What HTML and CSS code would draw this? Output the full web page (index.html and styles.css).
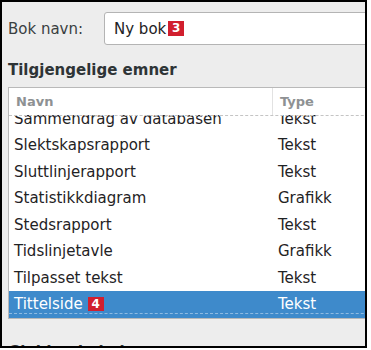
FILE: index.html
```html
<!DOCTYPE html>
<html lang="no">
<head>
<meta charset="utf-8">
<title>Bok</title>
<link rel="stylesheet" href="styles.css">
</head>
<body>
<div class="frame">
  <div class="name-row">
    <span class="label">Bok navn:</span>
    <div class="input">Ny bok<span class="badge badge-input">3</span></div>
  </div>
  <h2 class="section">Tilgjengelige emner</h2>
  <div class="list">
    <div class="head">
      <div class="col-name">Navn</div>
      <div class="col-type">Type</div>
    </div>
    <div class="body">
      <div class="rows">
        <div class="row"><div class="c-name">Sammendrag av databasen</div><div class="c-type">Tekst</div></div>
        <div class="row"><div class="c-name">Slektskapsrapport</div><div class="c-type">Tekst</div></div>
        <div class="row"><div class="c-name">Sluttlinjerapport</div><div class="c-type">Tekst</div></div>
        <div class="row"><div class="c-name">Statistikkdiagram</div><div class="c-type">Grafikk</div></div>
        <div class="row"><div class="c-name">Stedsrapport</div><div class="c-type">Tekst</div></div>
        <div class="row"><div class="c-name">Tidslinjetavle</div><div class="c-type">Grafikk</div></div>
        <div class="row"><div class="c-name">Tilpasset tekst</div><div class="c-type">Tekst</div></div>
        <div class="row selected"><div class="c-name">Tittelside<span class="badge badge-row">4</span></div><div class="c-type">Tekst</div></div>
      </div>
    </div>
  </div>
  <h2 class="section section-next">Gjeldende bok</h2>
</div>
</body>
</html>
```
FILE: styles.css
```css
html, body {
  margin: 0;
  padding: 0;
  background: #ffffff;
}

.frame {
  width: 363px;
  height: 344px;
  border: 2px solid #000000;
  background: #ededed;
  overflow: hidden;
  font-family: "DejaVu Sans", sans-serif;
  font-size: 15px;
  color: #2e3436;
}

.name-row {
  display: flex;
  align-items: center;
  padding: 10px 0 0 6px;
}

.label {
  width: 96px;
  flex-shrink: 0;
  color: #3a3f41;
}

.input {
  flex-shrink: 0;
  width: 300px;
  height: 33px;
  box-sizing: border-box;
  border: 1px solid #b4b4b4;
  border-radius: 3px;
  background: #ffffff;
  padding-left: 9px;
  display: flex;
  align-items: center;
  color: #1e2224;
}

.badge {
  display: inline-block;
  background: #d11f2e;
  color: #ffffff;
  font-weight: bold;
  font-size: 12px;
  text-align: center;
}

.badge-input {
  width: 16px;
  height: 15px;
  line-height: 15px;
  margin-left: 2px;
}

.badge-row {
  width: 16px;
  height: 14px;
  line-height: 14px;
  margin-left: 5px;
  vertical-align: 1px;
}

.section {
  margin: 15px 0 0 6px;
  font-size: 15px;
  line-height: 20px;
  font-weight: bold;
  color: #2e3436;
}

.list {
  margin: 7px 0 0 6px;
  width: 400px;
  border: 1px solid #b9b9b9;
  background: #ffffff;
}

.head {
  display: flex;
  height: 27px;
  line-height: 27px;
  font-size: 13px;
  font-weight: bold;
  color: #8e9193;
}

.col-name {
  width: 264px;
  box-sizing: border-box;
  padding-left: 7px;
  border-right: 1px solid #e2e2e2;
}

.col-type {
  padding-left: 7px;
}

.body {
  height: 202.5px;
  overflow: hidden;
  position: relative;
}

.body::before {
  content: "";
  position: absolute;
  left: 0;
  right: 0;
  top: 0;
  border-top: 1px dashed #c4c4c4;
  z-index: 1;
}

.rows {
  margin-top: -9.5px;
}

.row {
  display: flex;
  height: 26.5px;
  line-height: 26.5px;
  color: #1f2325;
}

.c-name {
  width: 264px;
  padding-left: 5px;
  box-sizing: border-box;
}

.c-type {
  padding-left: 5px;
}

.selected {
  background: #3e8acb;
  color: #ffffff;
  position: relative;
}

.selected::after {
  content: "";
  position: absolute;
  left: 0;
  right: 0;
  bottom: 4px;
  border-top: 1px dashed #8fbbe2;
}

.section-next {
  margin-top: 23px;
}
```
